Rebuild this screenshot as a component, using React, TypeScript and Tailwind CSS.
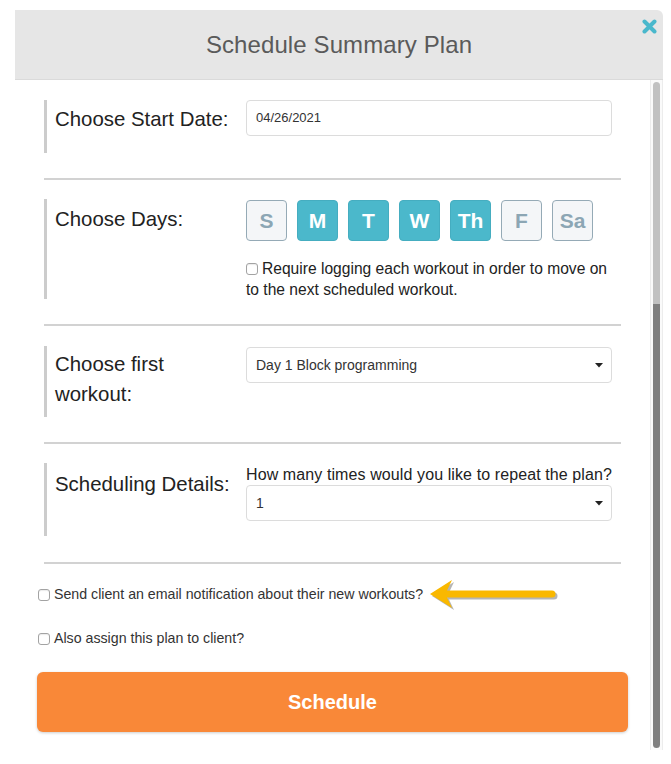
import React from 'react';

const DAYS = [
  { label: 'S', on: false },
  { label: 'M', on: true },
  { label: 'T', on: true },
  { label: 'W', on: true },
  { label: 'Th', on: true },
  { label: 'F', on: false },
  { label: 'Sa', on: false },
];

function Checkbox() {
  return <span className="inline-block w-[12px] h-[12px] shrink-0 rounded-[3px] border border-[#a3a3a3] bg-white shadow-[inset_0_1px_1px_rgba(0,0,0,0.08)]" />;
}

function Caret() {
  return (
    <svg width="8" height="5" viewBox="0 0 8 5" className="shrink-0">
      <path d="M0 0 H8 L4 4.5 Z" fill="#222" />
    </svg>
  );
}

function Divider({ className }: { className: string }) {
  return <div className={`h-[2px] bg-[#d2d2d2] ${className}`} />;
}

function Arrow() {
  const d = 'M2 16 L24 2 L19 12.5 L124 12.5 A3.5 3.5 0 0 1 124 19.5 L19 19.5 L24 30 Z';
  return (
    <svg width="132" height="34" viewBox="0 0 132 34" className="ml-[5px] -my-[7px] shrink-0">
      <path d={d} fill="#5b5b5b" opacity="0.45" transform="translate(2 2)" />
      <path d={d} fill="#f9b800" />
    </svg>
  );
}

export default function App() {
  return (
    <div className="min-h-[764px] bg-white pt-[10px] pl-[15px] font-['Liberation_Sans',Arial,sans-serif]">
      <div className="w-[648px]">
        {/* Header */}
        <div className="relative h-[70px] bg-[#e6e6e6] rounded-tr-[6px] border-b border-[#dadada] flex items-center justify-center">
          <h1 className="text-[24px] text-[#5a5a5a] font-normal tracking-[0.1px]">Schedule Summary Plan</h1>
          <button className="absolute right-[6px] top-[9px]" aria-label="Close">
            <svg width="15" height="15" viewBox="0 0 15 15">
              <path d="M2.5 2.5 L12.5 12.5 M12.5 2.5 L2.5 12.5" stroke="#4ab8cc" strokeWidth="4" strokeLinecap="round" />
            </svg>
          </button>
        </div>

        <div className="flex">
          {/* Content */}
          <div className="flex-1 px-[29px] pt-[20px] text-[#222]">
            {/* Start date */}
            <div className="flex h-[53px] border-l-[3px] border-[#cccccc]">
              <div className="w-[199px] pl-[8px] pt-[4px] text-[20.4px] leading-[30px]">Choose Start Date:</div>
              <div className="w-[366px]">
                <div className="h-[36px] border border-[#dcdcdc] rounded-[4px] pl-[9px] flex items-center text-[13px] text-[#333]">
                  04/26/2021
                </div>
              </div>
            </div>

            <Divider className="mt-[25px]" />

            {/* Days */}
            <div className="flex h-[100px] mt-[19px] border-l-[3px] border-[#cccccc]">
              <div className="w-[199px] pl-[8px] pt-[5px] text-[20.4px] leading-[30px]">Choose Days:</div>
              <div className="w-[366px] pt-[1px]">
                <div className="flex gap-[10px]">
                  {DAYS.map((d) => (
                    <div
                      key={d.label}
                      className={
                        d.on
                          ? 'w-[41px] h-[41px] rounded-[4px] border border-[#45adc0] bg-[#4bb8cb] text-white flex items-center justify-center text-[21px] font-bold'
                          : 'w-[41px] h-[41px] rounded-[4px] border border-[#95aab6] bg-[#f4f6f8] text-[#8ca6b4] flex items-center justify-center text-[21px] font-bold'
                      }
                    >
                      {d.label}
                    </div>
                  ))}
                </div>
                <div className="mt-[17px] text-[15.6px] leading-[21px] whitespace-nowrap">
                  <span className="inline-flex items-center align-[-1px] mr-[4px]">
                    <Checkbox />
                  </span>
                  Require logging each workout in order to move on
                  <br />
                  to the next scheduled workout.
                </div>
              </div>
            </div>

            <Divider className="mt-[25px]" />

            {/* First workout */}
            <div className="flex h-[71px] mt-[20px] border-l-[3px] border-[#cccccc]">
              <div className="w-[199px] pl-[8px] pt-[3px] text-[20.4px] leading-[30px]">
                Choose first
                <br />
                workout:
              </div>
              <div className="w-[366px] pt-[1px]">
                <div className="h-[36px] border border-[#dcdcdc] rounded-[4px] pl-[9px] pr-[8px] flex items-center justify-between text-[14px] text-[#333]">
                  <span>Day 1 Block programming</span>
                  <Caret />
                </div>
              </div>
            </div>

            <Divider className="mt-[25px]" />

            {/* Scheduling details */}
            <div className="flex h-[73px] mt-[19px] border-l-[3px] border-[#cccccc]">
              <div className="w-[199px] pl-[8px] pt-[6px] text-[20.4px] leading-[30px]">Scheduling Details:</div>
              <div className="w-[366px] pt-[2px]">
                <div className="text-[16px] leading-[20px] whitespace-nowrap tracking-[0.1px]">How many times would you like to repeat the plan?</div>
                <div className="h-[36px] border border-[#dcdcdc] rounded-[4px] pl-[9px] pr-[8px] flex items-center justify-between text-[14px] text-[#333]">
                  <span>1</span>
                  <Caret />
                </div>
              </div>
            </div>

            <Divider className="mt-[26px]" />

            {/* Options */}
            <div className="-mx-[7px] text-[14.2px] text-[#333]">
              <div className="flex items-center h-[20px] mt-[21px] pl-[1px]">
                <Checkbox />
                <span className="ml-[4px] whitespace-nowrap">Send client an email notification about their new workouts?</span>
                <Arrow />
              </div>
              <div className="flex items-center h-[20px] mt-[24px] pl-[1px]">
                <Checkbox />
                <span className="ml-[4px]">Also assign this plan to client?</span>
              </div>
              <button className="mt-[23px] w-full h-[60px] rounded-[6px] bg-[#f98838] text-white text-[20px] font-bold shadow-[0_1px_3px_rgba(0,0,0,0.2)]">
                Schedule
              </button>
            </div>
          </div>

          {/* Scrollbar */}
          <div className="w-[13px] h-[670px] border-l border-r border-[#ececec] bg-[#fafafa] flex justify-center pt-[2px] pb-[2px]">
            <div className="w-[7px] flex flex-col rounded-full overflow-hidden">
              <div className="h-[222px] bg-[#c1c1c1]" />
              <div className="flex-1 bg-[#7f7f7f]" />
            </div>
          </div>
        </div>
      </div>
    </div>
  );
}
